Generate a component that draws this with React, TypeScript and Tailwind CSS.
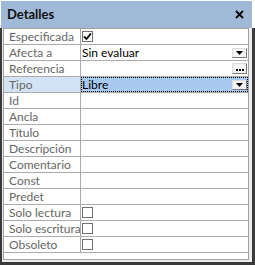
import React from "react";

const rows: { label: string; kind?: "check" | "checked" | "select" | "dots" | "selActive"; value?: string }[] = [
  { label: "Especificada", kind: "checked" },
  { label: "Afecta a", kind: "select", value: "Sin evaluar" },
  { label: "Referencia", kind: "dots" },
  { label: "Tipo", kind: "selActive", value: "Libre" },
  { label: "Id" },
  { label: "Ancla" },
  { label: "Título" },
  { label: "Descripción" },
  { label: "Comentario" },
  { label: "Const" },
  { label: "Predet" },
  { label: "Solo lectura", kind: "check" },
  { label: "Solo escritura", kind: "check" },
  { label: "Obsoleto", kind: "check" },
];

function DropBtn() {
  return (
    <div className="absolute right-[1px] top-[3px] w-[15px] h-[10px] bg-[#f4f4f4] border border-[#dcdcdc] border-r-[#7a7a7a] border-b-[#7a7a7a] flex items-center justify-center">
      <svg width="7" height="4" viewBox="0 0 7 4">
        <path d="M0 0H7L3.5 4Z" fill="#000" />
      </svg>
    </div>
  );
}

function Check({ checked }: { checked?: boolean }) {
  return (
    <div className="w-[11px] h-[11px] border border-[#707070] bg-white flex items-center justify-center ml-[1px]">
      {checked && (
        <svg width="9" height="9" viewBox="0 0 9 9">
          <path d="M1 4.5L3.5 7L8 1.5" stroke="#000" strokeWidth="1.8" fill="none" />
        </svg>
      )}
    </div>
  );
}

export default function App() {
  return (
    <div className="w-[255px] h-[265px] bg-white flex flex-col font-['Lato',sans-serif]">
      <div className="h-[27px] mt-[1px] ml-[1px] mr-[3px] bg-[#9fb9d6] flex items-center justify-between pl-[6px] pr-[8px] shrink-0">
        <span className="text-[13px] font-bold text-[#111] leading-none">Detalles</span>
        <svg width="9" height="9" viewBox="0 0 9 9">
          <path d="M1 1L8 8M8 1L1 8" stroke="#000" strokeWidth="1.8" />
        </svg>
      </div>
      <div className="flex-1 border-l-2 border-r-[3px] border-b-[3px] border-[#3a3a3a] bg-[#ececec] pl-[1px] pr-[3px] pb-[2px] flex">
        <div className="flex-1 bg-white border border-[#a0a0a0] flex flex-col">
          {rows.map((r) => {
            const active = r.kind === "selActive";
            return (
              <div key={r.label} className="flex flex-col h-[16px] shrink-0">
                <div className="flex h-[15px]">
                  <div
                    className={`w-[76px] shrink-0 pl-[5px] text-[12px] leading-[15px] text-[#666666] whitespace-nowrap overflow-visible ${
                      active ? "bg-[#d3e3f6]" : ""
                    }`}
                  >
                    {r.label}
                  </div>
                  <div className="w-[1px] bg-[#ababab] shrink-0" />
                  <div
                    className={`flex-1 relative flex items-center text-[12px] leading-[15px] text-black ${
                      active ? "bg-[#a8c9ef] outline-1 outline-dotted outline-black -outline-offset-1" : ""
                    }`}
                  >
                    {(r.kind === "check" || r.kind === "checked") && <Check checked={r.kind === "checked"} />}
                    {r.value && <span className="pl-[1px]">{r.value}</span>}
                    {(r.kind === "select" || r.kind === "selActive") && <DropBtn />}
                    {r.kind === "dots" && (
                      <div className="absolute right-[1px] top-[2px] w-[15px] h-[11px] bg-[#f4f4f4] border border-[#dcdcdc] border-r-[#7a7a7a] border-b-[#7a7a7a] flex items-end justify-center pb-[2px] gap-[1px]">
                        <div className="w-[2px] h-[2px] bg-black" />
                        <div className="w-[2px] h-[2px] bg-black" />
                        <div className="w-[2px] h-[2px] bg-black" />
                      </div>
                    )}
                  </div>
                </div>
                <div className="h-[1px] bg-[#ababab]" />
              </div>
            );
          })}
        </div>
      </div>
    </div>
  );
}
